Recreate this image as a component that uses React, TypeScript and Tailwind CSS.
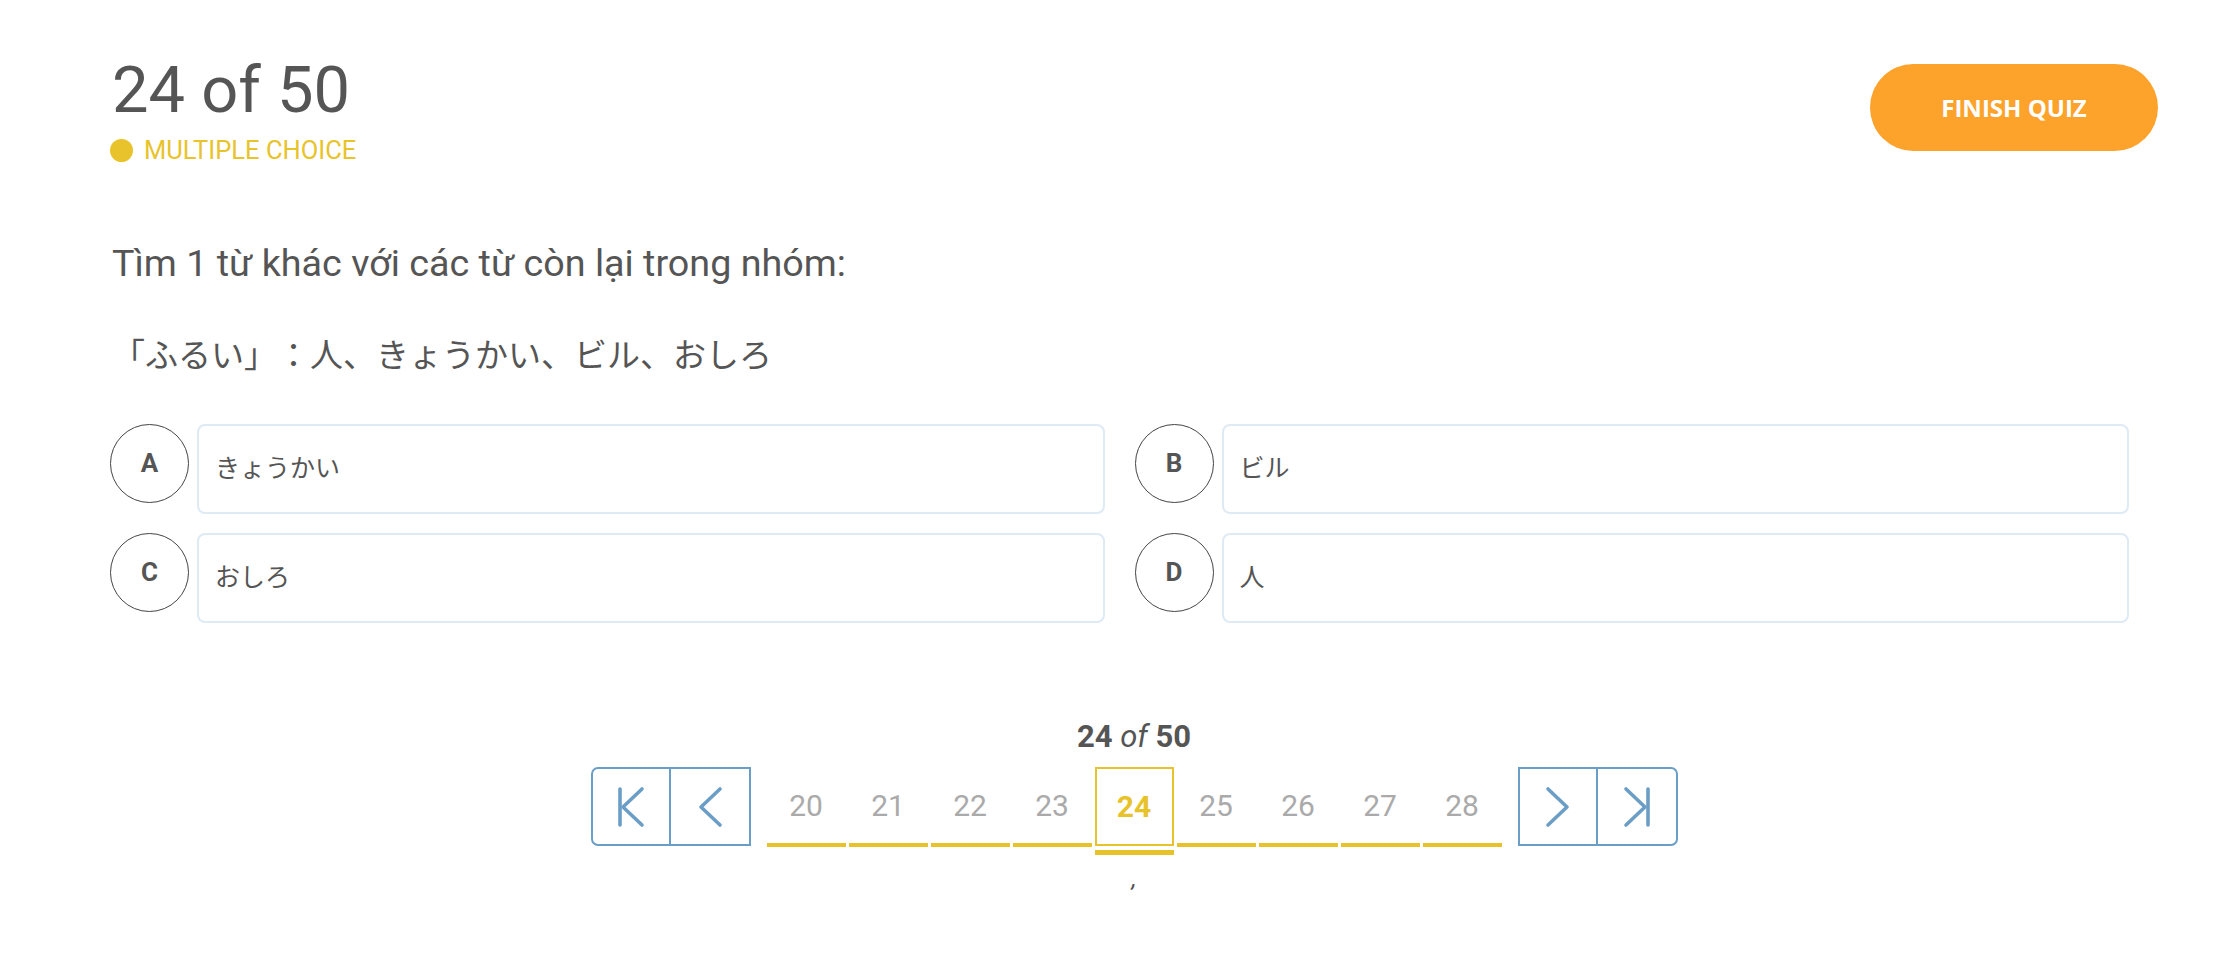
import { FC } from "react";

const options = [
  { key: "A", label: "きょうかい" },
  { key: "B", label: "ビル" },
  { key: "C", label: "おしろ" },
  { key: "D", label: "人" },
];

const pages = [20, 21, 22, 23, 24, 25, 26, 27, 28];
const current = 24;

const Chevron: FC<{ dir: "left" | "right"; edge?: boolean }> = ({ dir, edge }) => {
  const flip = dir === "right";
  return (
    <svg
      viewBox="0 0 30 42"
      className={`h-[42px] w-[30px] ${flip ? "-scale-x-100" : ""}`}
      fill="none"
      stroke="#6b9ec7"
      strokeWidth={3.6}
      strokeLinecap="round"
      strokeLinejoin="round"
    >
      {edge ? (
        <>
          <path d="M4 3v36" />
          <path d="M26 3 L7 21 L26 39" />
        </>
      ) : (
        <path d="M25 3 L6 21 L25 39" />
      )}
    </svg>
  );
};

const NavGroup: FC<{ side: "left" | "right" }> = ({ side }) => {
  const left = side === "left";
  return (
    <div
      className={`flex border-2 border-[#6b9ec7] ${
        left ? "rounded-l-[7px]" : "rounded-r-[7px]"
      }`}
    >
      <button className="flex h-[75px] w-[78px] items-center justify-center border-r-2 border-[#6b9ec7]">
        <Chevron dir={side} edge={left} />
      </button>
      <button className="flex h-[75px] w-[78px] items-center justify-center">
        <Chevron dir={side} edge={!left} />
      </button>
    </div>
  );
};

export default function App() {
  return (
    <div
      className="min-h-screen bg-white pl-[110px] pr-[58px] pt-[58px] text-[#555] [text-spacing-trim:space-all]"
      style={{ fontFamily: "Roboto, 'Noto Sans CJK JP', sans-serif" }}
    >
      <header className="flex items-start justify-between">
        <div>
          <h1 className="pl-[2px] text-[65px] leading-none font-normal">24 of 50</h1>
          <div className="mt-[14px] flex items-center gap-[11px]">
            <span className="h-[23px] w-[23px] rounded-full bg-[#e8c32b]" />
            <span className="text-[25.5px] leading-[26px] text-[#e8c32b]">MULTIPLE CHOICE</span>
          </div>
        </div>
        <button
          className="mt-[6px] h-[87px] w-[288px] rounded-full bg-[#fda22b] text-[24px] font-bold text-white"
          style={{ fontFamily: "'Open Sans', sans-serif" }}
        >
          FINISH QUIZ
        </button>
      </header>

      <p className="mt-[78px] pl-[2px] text-[37.7px] leading-[44px]">
        Tìm 1 từ khác với các từ còn lại trong nhóm:
      </p>
      <p className="mt-[49px] pl-[2px] text-[33px] leading-[44px]">
        「ふるい」：人、きょうかい、ビル、おしろ
      </p>

      <div className="mt-[46px] grid grid-cols-2 gap-x-[30px] gap-y-[19px] pr-[29px]">
        {options.map((o) => (
          <div key={o.key} className="flex items-start gap-[8px]">
            <div className="flex h-[79px] w-[79px] shrink-0 items-center justify-center rounded-full border-[1.5px] border-[#444] text-[26px] font-bold">
              {o.key}
            </div>
            <div className="flex h-[90px] flex-1 items-center rounded-[8px] border-2 border-[#deeaf4] px-[16px] text-[25px]">
              {o.label}
            </div>
          </div>
        ))}
      </div>

      <div className="mt-[96px] flex flex-col items-center">
        <div className="text-[31px] leading-[36px]">
          <b>24</b> <i>of</i> <b>50</b>
        </div>
        <div className="mt-[12px] flex items-start">
          <NavGroup side="left" />
          <div className="mx-[16px] flex gap-[3px]">
            {pages.map((p) =>
              p === current ? (
                <div key={p} className="flex flex-col">
                  <div className="flex h-[79px] w-[79px] items-center justify-center border-2 border-[#e8c22a] text-[30px] font-bold text-[#e8c22a]">
                    {p}
                  </div>
                  <div className="mt-[4px] h-[5px] w-[79px] bg-[#e8c22a]" />
                </div>
              ) : (
                <div
                  key={p}
                  className="flex h-[80px] w-[79px] items-center justify-center border-b-4 border-[#e8c22a] text-[30px] text-[#aaa]"
                >
                  {p}
                </div>
              )
            )}
          </div>
          <NavGroup side="right" />
        </div>
        <div className="mt-[12px] text-[24px] italic leading-[24px]">,</div>
      </div>
    </div>
  );
}
